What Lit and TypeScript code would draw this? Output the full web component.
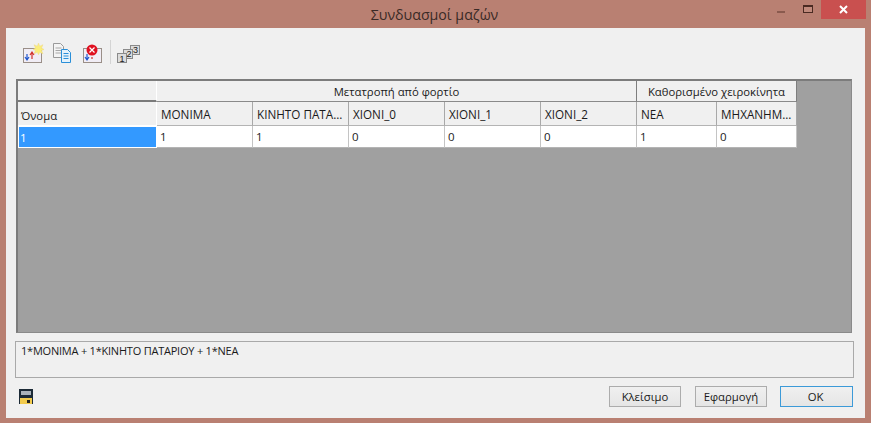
import { LitElement, html, css, svg } from "lit";
import { customElement } from "lit/decorators.js";

@customElement("app-root")
export class AppRoot extends LitElement {
  static styles = css`
    :host { display: block; width: 871px; height: 423px; background: #b98072; font-family: "Open Sans", "Noto Sans", sans-serif; font-size: 11.3px; color: #1a1a1a; overflow: hidden; }
    .title { height: 28px; display: flex; align-items: center; position: relative; }
    .title-text { flex: 1; text-align: center; font-size: 14.2px; color: #3a2a26; padding-right: 2px; margin-top: 1px; }
    .ctrls { position: absolute; right: 5px; top: 0; display: flex; align-items: flex-start; }
    .min { width: 8px; height: 2px; background: #8a5a4e; margin: 11px 18px 0 0; }
    .max { width: 8px; height: 5px; border: 1px solid #4a2a22; border-top-width: 2px; background: #c08a7c; margin: 5px 8px 0 0; }
    .close { width: 45px; height: 19px; background: #c9504f; color: #fff; display: flex; align-items: center; justify-content: center; }
    .client { margin: 0 6px; height: 390px; background: #f0f0f0; padding: 0 0 0 9px; display: flex; flex-direction: column; box-sizing: border-box; }
    .toolbar { height: 51px; display: flex; align-items: flex-start; gap: 8px; padding: 13px 0 0 7px; box-sizing: border-box; }
    .sep { width: 1px; height: 24px; background: #d4d4d4; margin: -1px -3px 0 -1px; }
    .grid { height: 254px; background: #a0a0a0; border: 1px solid #8a8a8a; border-top: 2px solid #7c7c7c; border-left: 2px solid #7c7c7c; box-sizing: border-box; width: 836px; margin-left: 1px; }
    .table { display: grid; grid-template-columns: 139px 96px 96px 96px 96px 96px 80px 80px; grid-template-rows: 21px 24px 22px; width: 779px; }
    .c { box-sizing: border-box; display: flex; align-items: center; padding-left: 4px; white-space: nowrap; overflow: hidden; border-right: 1px solid #a8a8a8; }
    .hd { background: #f0f0f0; border-bottom: 1px solid #b4b4b4; font-size: 11.7px; }
    .group { justify-content: center; padding-left: 0; border-right: 1px solid #7e7e7e; border-bottom: 1px solid #8a8a8a; font-size: 11.3px; }
    .blank { border-bottom: 2px solid #7a7a7a; border-right: 1px solid #fff; }
    .name { border-right: 1px solid #fff; padding-top: 3px; padding-left: 3px; border-bottom: 1px solid #fff; font-size: 11.3px; }
    .cell { background: #fff; border-bottom: 1px solid #b4b4b4; border-right: 1px solid #c4c4c4; padding-left: 3px; font-size: 11.5px; }
    .sel { background: #3399ff; color: #fff; border: 1px solid #fff; padding-left: 1px; }
    .formula { width: 839px; height: 37px; margin-top: 8px; border: 1px solid #a9a9a9; box-sizing: border-box; padding: 1px 5px; font-size: 11px; letter-spacing: -0.22px; background: #f0f0f0; }
    .bottom { display: flex; align-items: center; margin-top: 8px; height: 21px; width: 838px; }
    .disk { margin-left: 4px; margin-right: auto; display: block; }
    button { height: 21px; width: 72px; font: inherit; color: #1a1a1a; border: 1px solid #acacac; background: linear-gradient(#f0f0f0, #e5e5e5); padding: 0; margin-left: 14px; }
    button.def { width: 73px; border: 1px solid #3c9ad8; margin-left: 13px; padding-right: 2px; }
    .num { font-family: "Liberation Sans", sans-serif; font-size: 9px; fill: #222; text-anchor: middle; }
  `;

  icon(body: unknown, w = 24) {
    return html`<svg width=${w} height="24" viewBox="0 0 ${w} 24">${body}</svg>`;
  }

  render() {
    const box = (x: number) => svg`<rect x=${x + 0.5} y="7.5" width="18" height="14" fill="#f1edf5" stroke="#9a8f88"/>`;
    const down = (x: number) => svg`<path d="M${x} 13v5M${x - 2} 16l2 3 2-3" stroke="#1f55cc" fill="none" stroke-width="1.200"/>`;
    const newIc = svg`${box(1)}${down(5)}<path d="M10 18v-6M8 14l2-3 2 3" stroke="#d2302a" fill="none" stroke-width="1.200"/><path d="M16.500 2l1.200 3.200 3.300-1.500-1.500 3.300 2.500 1.500-2.500 1 1.500 3.300-3.300-1.500-1.200 2.500-1.200-2.500-3.300 1.500 1.500-3.300-2.500-1 2.500-1.500-1.500-3.300 3.300 1.500z" fill="#fbee7a" stroke="#eed88a" stroke-width=".5"/>`;
    const copyIc = svg`<path d="M1.500 2.500h7l3 3v11h-10z" fill="#f4f4f4" stroke="#9a9a9a"/><path d="M3.500 7h6M3.500 9.500h6M3.500 12h6" stroke="#a8a8a8"/><path d="M9.500 8.500h6l3 3v10h-9z" fill="#e4f2fc" stroke="#2a8fd8"/><path d="M11.500 12.500h5M11.500 15h5M11.500 17.500h5" stroke="#2a8fd8"/>`;
    const delIc = svg`${box(2)}${down(6)}<path d="M11 16v2" stroke="#d0302a" stroke-width="1.200"/><circle cx="11" cy="9" r="5.500" fill="#e01020"/><path d="M8.500 6.500l5 5M13.500 6.500l-5 5" stroke="#fff" stroke-width="1.200"/>`;
    const numIc = svg`<rect x="14.500" y="4.500" width="9" height="9" fill="#dcdcdc" stroke="#8a8a8a"/><rect x="7.500" y="8.500" width="9" height="9" fill="#dcdcdc" stroke="#8a8a8a"/><rect x="1.500" y="12.500" width="9" height="9" fill="#dcdcdc" stroke="#8a8a8a"/><text class="num" x="6" y="20.500">1</text><text class="num" x="13" y="16">2</text><text class="num" x="19.500" y="12">3</text>`;
    const cols = ["ΜΟΝΙΜΑ", "ΚΙΝΗΤΟ ΠΑΤΑ...", "ΧΙΟΝΙ_0", "ΧΙΟΝΙ_1", "ΧΙΟΝΙ_2", "ΝΕΑ", "ΜΗΧΑΝΗΜ..."];
    const vals = ["1", "1", "0", "0", "0", "1", "0"];
    return html`
      <div class="title">
        <div class="title-text">Συνδυασμοί μαζών</div>
        <div class="ctrls">
          <div class="min"></div><div class="max"></div>
          <div class="close"><svg width="9" height="9" viewBox="0 0 9 9"><path d="M1 1l7 7M8 1l-7 7" stroke="#fff" stroke-width="2"/></svg></div>
        </div>
      </div>
      <div class="client">
        <div class="toolbar">
          ${this.icon(newIc, 22)}${this.icon(copyIc, 21)}${this.icon(delIc, 22)}
          <div class="sep"></div>${this.icon(numIc, 25)}
        </div>
        <div class="grid">
          <div class="table">
            <div class="c hd blank"></div>
            <div class="c hd group" style="grid-column: span 5">Μετατροπή από φορτίο</div>
            <div class="c hd group" style="grid-column: span 2">Καθορισμένο χειροκίνητα</div>
            <div class="c hd name">Όνομα</div>
            ${cols.map((c) => html`<div class="c hd">${c}</div>`)}
            <div class="c cell sel">1</div>
            ${vals.map((v) => html`<div class="c cell">${v}</div>`)}
          </div>
        </div>
        <div class="formula">1*ΜΟΝΙΜΑ + 1*ΚΙΝΗΤΟ ΠΑΤΑΡΙΟΥ + 1*ΝΕΑ</div>
        <div class="bottom">
          <svg class="disk" width="14" height="15" viewBox="0 0 14 15"><path d="M0 0h14v15H0z" fill="#1c2a36"/><rect x="2" y="2" width="10" height="4" fill="#aab2ba"/><rect x="1" y="9" width="12" height="6" fill="#f2cb4e"/><rect x="8" y="11" width="3" height="3" fill="#222"/></svg>
          <button>Κλείσιμο</button><button>Εφαρμογή</button><button class="def">OK</button>
        </div>
      </div>
    `;
  }
}
